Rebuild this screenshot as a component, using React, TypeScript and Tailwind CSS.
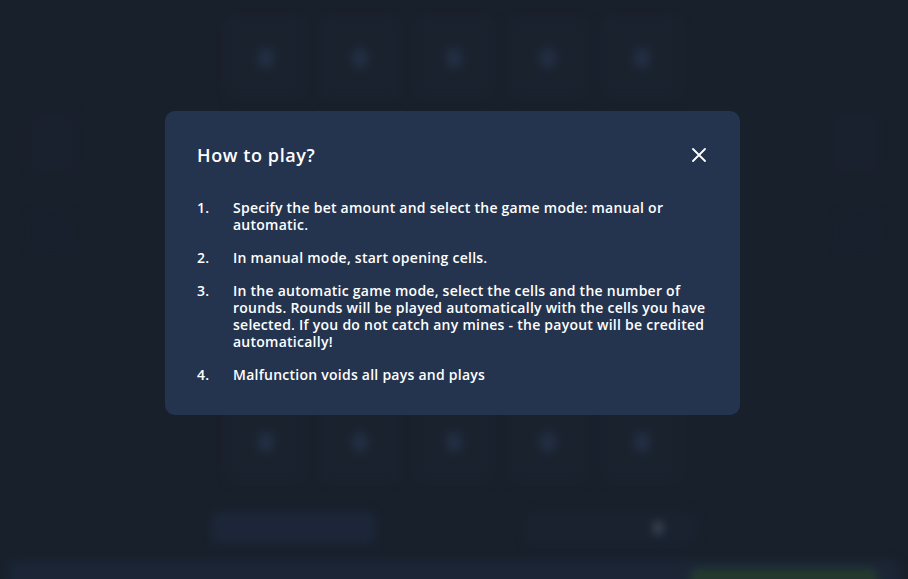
import React from "react";

const steps = [
  "Specify the bet amount and select the game mode: manual or automatic.",
  "In manual mode, start opening cells.",
  "In the automatic game mode, select the cells and the number of rounds. Rounds will be played automatically with the cells you have selected. If you do not catch any mines - the payout will be credited automatically!",
  "Malfunction voids all pays and plays",
];

export default function App() {
  const cells = Array.from({ length: 25 });
  return (
    <div className="relative w-[908px] h-[579px] overflow-hidden bg-[#18202b]" style={{ fontFamily: '"Open Sans", "Liberation Sans", sans-serif' }}>
      {/* blurred game background */}
      <div className="blur-[4px] flex flex-col items-center h-full">
        <div className="flex w-full justify-between px-[30px] pt-[18px]">
          <div className="flex flex-col gap-[40px] pt-[95px]">
            <div className="w-[45px] h-[60px] rounded bg-[#1a212e]" />
            <div className="w-[40px] h-[40px] rounded bg-[#19202d]" />
          </div>
          <div className="grid grid-cols-5 gap-x-[14px] gap-y-[16px]">
            {cells.map((_, i) => (
              <div key={i} className="w-[80px] h-[80px] rounded-[8px] bg-[#1a222e] border border-[#1d2634] flex items-center justify-center">
                <div className="w-[16px] h-[20px] rounded-full bg-[#222e43]" />
              </div>
            ))}
          </div>
          <div className="flex flex-col gap-[40px] pt-[95px] items-end">
            <div className="w-[45px] h-[60px] rounded bg-[#1a212e]" />
            <div className="w-[40px] h-[40px] rounded bg-[#19202d]" />
          </div>
        </div>
        <div className="flex w-[486px] justify-between mt-[30px]">
          <div className="w-[165px] h-[32px] rounded-[8px] bg-[#1c2638]" />
          <div className="w-[172px] h-[32px] rounded-[8px] bg-[#1a2230] flex items-center justify-end pr-[34px]">
            <div className="w-[10px] h-[14px] rounded-full bg-[#3a4354]" />
          </div>
        </div>
        <div className="mt-[16px] w-[892px] flex-1 rounded-t-[10px] bg-[#1b2536] flex justify-end pr-[22px] pt-[8px]">
          <div className="w-[188px] h-[40px] rounded-[8px] bg-[#23392f]" />
        </div>
      </div>

      {/* overlay + modal */}
      <div className="absolute inset-0 flex justify-center pt-[111px] pr-[3px]">
        <div className="w-[575px] h-[304px] rounded-[10px] bg-[#24344f] px-[32px] pt-[31px] text-white">
          <div className="flex items-center justify-between">
            <h2 className="text-[18px] leading-[26px] font-semibold tracking-[0.6px]">How to play?</h2>
            <svg width="14" height="14" viewBox="0 0 14 14" className="mr-[2px]">
              <path d="M1 1 L13 13 M13 1 L1 13" stroke="white" strokeWidth="1.8" strokeLinecap="round" />
            </svg>
          </div>
          <ol className="mt-[31px] flex flex-col gap-[16px]">
            {steps.map((s, i) => (
              <li key={i} className="flex text-[14px] leading-[17px] font-semibold tracking-[0.25px]">
                <span className="w-[36px] shrink-0">{i + 1}.</span>
                <span className="w-[478px]">{s}</span>
              </li>
            ))}
          </ol>
        </div>
      </div>
    </div>
  );
}
